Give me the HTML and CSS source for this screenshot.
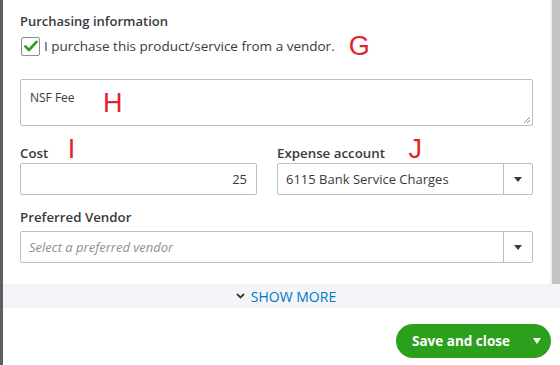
FILE: index.html
```html
<html>
  <head>
    <title>Product/service purchasing</title>
    <meta http-equiv="Content-Type" content="text/html;charset=UTF-8" />
    <link rel="stylesheet" href="styles.css">
  </head>
  <body>
    <div class="frame">
      <div class="edge"></div>
      <div class="panel">
        <div class="scroll">
          <div class="content">
            <div class="title">Purchasing information</div>
            <label class="check-row">
              <span class="checkbox">
                <svg width="14" height="12" viewBox="0 0 14 12"><path d="M1.5 6.5 L5 10 L12.5 1.8" fill="none" stroke="#2ca01c" stroke-width="2.6" stroke-linecap="round" stroke-linejoin="round"/></svg>
              </span>
              <span class="check-text">I purchase this product/service from a vendor.</span>
              <span class="mark mark-g">G</span>
            </label>

            <div class="desc">
              <div class="desc-text">NSF Fee</div>
              <span class="mark mark-h">H</span>
              <svg class="grip" width="8" height="8" viewBox="0 0 8 8"><path d="M7 1 L1 7 M7 4 L4 7" stroke="#8d9096" stroke-width="1"/></svg>
            </div>

            <div class="pair">
              <div class="field">
                <div class="label">Cost <span class="mark mark-i">I</span></div>
                <div class="input num">25</div>
              </div>
              <div class="field">
                <div class="label">Expense account <span class="mark mark-j">J</span></div>
                <div class="input select">
                  <span class="value">6115 Bank Service Charges</span>
                  <span class="caret"><i></i></span>
                </div>
              </div>
            </div>

            <div class="label vendor-label">Preferred Vendor</div>
            <div class="input select">
              <span class="value placeholder">Select a preferred vendor</span>
              <span class="caret"><i></i></span>
            </div>
          </div>
          <div class="scrollbar"><div class="thumb"></div></div>
        </div>

        <div class="more">
          <svg width="9" height="6" viewBox="0 0 9 6"><path d="M1 1 L4.5 4.5 L8 1" fill="none" stroke="#393a3d" stroke-width="1.8"/></svg>
          <span>SHOW MORE</span>
        </div>

        <div class="footer">
          <div class="save">
            <span class="save-text">Save and close</span>
            <span class="save-caret"></span>
          </div>
        </div>
      </div>
    </div>
  </body>
</html>
```
FILE: styles.css
```css
body {
  margin: 0;
  background: #fff;
  font-family: "Open Sans", "Noto Sans", sans-serif;
  color: #393a3d;
}

.frame {
  display: flex;
  width: 560px;
  height: 365px;
  overflow: hidden;
}

.edge {
  width: 3px;
  background: #5f5f5f;
  flex: none;
}

.panel {
  flex: 1;
  display: flex;
  flex-direction: column;
}

/* scrolling body of the drawer */
.scroll {
  height: 284px;
  display: flex;
}

.content {
  flex: 1;
  padding: 12px 17px 0 17px;
}

.scrollbar {
  width: 10px;
  background: #f0f0f0;
  display: flex;
  justify-content: flex-end;
}

.thumb {
  width: 8px;
  height: 100%;
  background: #c3c3c3;
}

.title {
  font-size: 13px;
  line-height: 18px;
  height: 18px;
  font-weight: 600;
}

.check-row {
  display: flex;
  align-items: center;
  height: 24px;
  margin-top: 4px;
}

.checkbox {
  width: 17px;
  height: 17px;
  border: 1px solid #8d9096;
  border-radius: 2px;
  display: flex;
  align-items: center;
  justify-content: center;
  margin-left: 1px;
  flex: none;
}

.check-text {
  font-size: 13.5px;
  margin-left: 4px;
}

/* red callout letters */
.mark {
  font-family: "Liberation Sans", sans-serif;
  font-size: 27px;
  line-height: 18px;
  color: #e0242c;
  font-weight: 400;
}

.mark-g {
  margin-left: 14px;
}

.desc {
  position: relative;
  margin-top: 21px;
  height: 45px;
  border: 1px solid #babec5;
  border-radius: 2px;
}

.desc-text {
  font-size: 12px;
  padding: 9px 0 0 9px;
}

.mark-h {
  position: absolute;
  left: 82px;
  top: 14px;
}

.grip {
  position: absolute;
  right: 1px;
  bottom: 1px;
}

.pair {
  display: grid;
  grid-template-columns: 237px 1fr;
  column-gap: 20px;
  margin-top: 14px;
}

.label {
  font-size: 13.3px;
  line-height: 18px;
  height: 18px;
  font-weight: 600;
  margin-bottom: 5px;
}

.mark-i {
  margin-left: 16px;
}

.mark-j {
  margin-left: 20px;
}

.input {
  height: 30px;
  border: 1px solid #babec5;
  border-radius: 2px;
  font-size: 13px;
  display: flex;
  align-items: center;
}

.num {
  justify-content: flex-end;
  padding-right: 9px;
}

.select .value {
  flex: 1;
  padding-left: 8px;
}

.placeholder {
  color: #8d9096;
  font-style: italic;
}

.caret {
  width: 28px;
  height: 100%;
  border-left: 1px solid #babec5;
  display: flex;
  align-items: center;
  justify-content: center;
}

.caret i {
  border-left: 4px solid transparent;
  border-right: 4px solid transparent;
  border-top: 5px solid #393a3d;
}

.vendor-label {
  margin-top: 13px;
}

.more {
  height: 24px;
  background: #f4f5f8;
  display: flex;
  align-items: center;
  justify-content: center;
  gap: 6px;
  padding-left: 9px;
  font-size: 14px;
  color: #0077c5;
}

.footer {
  display: flex;
  justify-content: flex-end;
  padding: 16px 9px 0 0;
}

.save {
  height: 34px;
  width: 155px;
  border-radius: 17px;
  background: #2ca01c;
  color: #fff;
  display: flex;
  align-items: center;
  box-sizing: border-box;
  padding-left: 16px;
}

.save-text {
  font-size: 13.5px;
  font-weight: 700;
  flex: 1;
}

.save-caret {
  margin-right: 10px;
  border-left: 4.5px solid transparent;
  border-right: 4.5px solid transparent;
  border-top: 6px solid #fff;
}
```
